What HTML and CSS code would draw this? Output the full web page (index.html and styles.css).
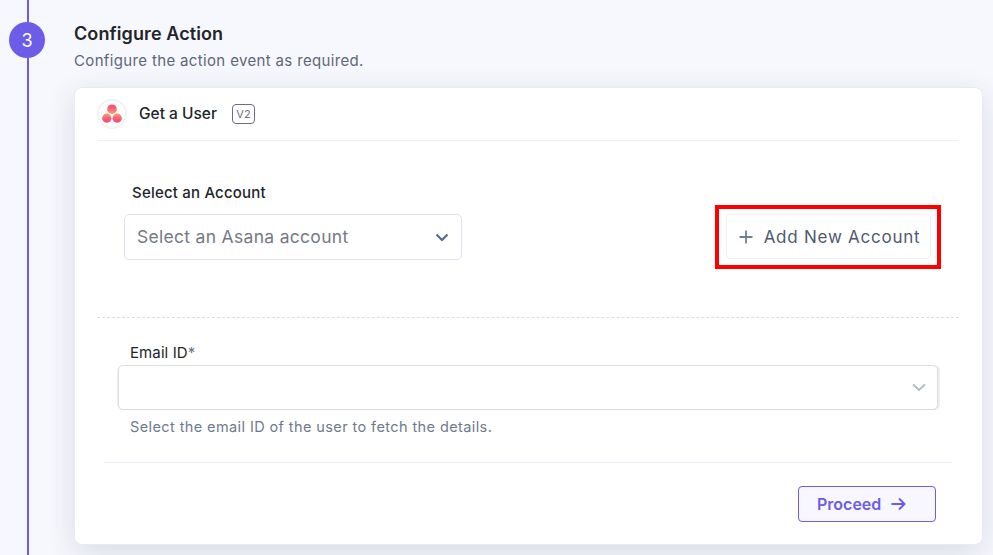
FILE: index.html
```html
<!DOCTYPE html>
<html lang="en">
<head>
    <meta charset="UTF-8">
    <meta name="viewport" content="width=device-width, initial-scale=1.0">
    <title>Configure Action</title>
    <link rel="stylesheet" href="styles.css">
</head>
<body>
    <div class="step">
        <div class="rail">
            <div class="rail-line rail-top"></div>
            <div class="step-number">3</div>
            <div class="rail-line rail-bottom"></div>
        </div>
        <div class="step-body">
            <h1>Configure Action</h1>
            <p class="step-desc">Configure the action event as required.</p>
            <div class="card">
                <div class="card-head">
                    <span class="app-logo">
                        <svg width="20" height="20" viewBox="0 0 20 20">
                            <defs>
                                <linearGradient id="asanaTop" x1="0" y1="0" x2="0" y2="1">
                                    <stop offset="0.25" stop-color="#f9507f"></stop>
                                    <stop offset="1" stop-color="#fda25f"></stop>
                                </linearGradient>
                                <linearGradient id="asanaLow" x1="0" y1="0" x2="0" y2="1">
                                    <stop offset="0" stop-color="#fd9a60"></stop>
                                    <stop offset="0.7" stop-color="#f9507f"></stop>
                                </linearGradient>
                            </defs>
                            <circle cx="10" cy="5.2" r="4.8" fill="url(#asanaTop)"></circle>
                            <circle cx="4.8" cy="14.2" r="4.6" fill="url(#asanaLow)"></circle>
                            <circle cx="15.2" cy="14.2" r="4.6" fill="url(#asanaLow)"></circle>
                        </svg>
                    </span>
                    <span class="action-name">Get a User</span>
                    <span class="version">V2</span>
                </div>
                <div class="account-row">
                    <div class="account-field">
                        <label class="account-label">Select an Account</label>
                        <div class="account-select">
                            <span class="placeholder">Select an Asana account</span>
                            <svg width="14" height="9" viewBox="0 0 14 9" fill="none" stroke="#54698d" stroke-width="2.2">
                                <path d="M1.5 1.5 7 7l5.5-5.5"></path>
                            </svg>
                        </div>
                    </div>
                    <div class="highlight">
                        <button class="add-account">
                            <svg width="14" height="14" viewBox="0 0 14 14" fill="none" stroke="#6b7f9e" stroke-width="1.8">
                                <path d="M7 .5v13M.5 7h13"></path>
                            </svg>
                            Add New Account
                        </button>
                    </div>
                </div>
                <div class="email-field">
                    <label class="email-label">Email ID<span class="star">*</span></label>
                    <div class="email-select">
                        <svg width="14" height="9" viewBox="0 0 14 9" fill="none" stroke="#b3bccb" stroke-width="2">
                            <path d="M1 1.5 7 7l6-5.5"></path>
                        </svg>
                    </div>
                    <p class="hint">Select the email ID of the user to fetch the details.</p>
                </div>
                <div class="card-foot">
                    <button class="proceed">
                        Proceed
                        <svg width="15" height="14" viewBox="0 0 15 14" fill="none" stroke="#6c5ce7" stroke-width="2">
                            <path d="M.5 7h13M8 1.5 13.5 7 8 12.5"></path>
                        </svg>
                    </button>
                </div>
            </div>
        </div>
    </div>
</body>
</html>
```

FILE: styles.css
```css
* {
    margin: 0;
    padding: 0;
    box-sizing: border-box;
}
html, body {
    height: 100%;
    overflow: hidden;
}
body {
    background: #f7f8fd;
    font-family: 'Inter', 'Liberation Sans', sans-serif;
    color: #212529;
}
.step {
    display: flex;
    height: 555px;
}
.rail {
    width: 74px;
    padding-left: 9px;
    display: flex;
    flex-direction: column;
    align-items: flex-start;
}
.rail-line {
    width: 2px;
    margin-left: 18px;
    background: #6c5ce7;
}
.rail-top {
    height: 22px;
}
.rail-bottom {
    flex: 1;
}
.step-number {
    width: 36px;
    height: 36px;
    border-radius: 50%;
    background: #6c5ce7;
    color: #fff;
    font-size: 18px;
    display: flex;
    align-items: center;
    justify-content: center;
}
.step-body {
    width: 909px;
    padding-top: 23px;
}
h1 {
    font-size: 18px;
    line-height: 22px;
    font-weight: 600;
    letter-spacing: 0.1px;
    color: #212529;
}
.step-desc {
    font-size: 15px;
    line-height: 20px;
    letter-spacing: 0.35px;
    color: #5c6779;
    margin-top: 6px;
}
.card {
    margin-top: 16px;
    height: 458px;
    background: #fff;
    border: 1px solid #e9ebf2;
    border-radius: 8px;
    box-shadow: 0 8px 30px rgba(40, 50, 90, 0.14);
    padding: 0 23px 0 22px;
}
.card-head {
    height: 53px;
    display: flex;
    align-items: center;
    border-bottom: 1px solid #eceef7;
}
.app-logo {
    width: 30px;
    height: 30px;
    border-radius: 50%;
    border: 2px solid #f2f2f4;
    display: flex;
    align-items: center;
    justify-content: center;
}
.action-name {
    font-size: 15.5px;
    font-weight: 500;
    margin-left: 12px;
    padding-bottom: 2px;
}
.version {
    margin-left: 15px;
    width: 23px;
    height: 20px;
    border: 1px solid #6f6a8a;
    border-radius: 4px;
    font-size: 11px;
    color: #6f7280;
    display: flex;
    align-items: center;
    justify-content: center;
}
.account-row {
    height: 177px;
    display: flex;
    justify-content: space-between;
    border-bottom: 1px dashed #dcdee3;
}
.account-field {
    padding: 43px 0 0 27px;
}
.account-label {
    display: block;
    padding-left: 8px;
    font-size: 15px;
    line-height: 17px;
    font-weight: 500;
    letter-spacing: 0.2px;
}
.account-select {
    width: 338px;
    height: 46px;
    margin-top: 13px;
    padding: 0 12px 0 12px;
    border: 1px solid #dfe3f0;
    border-radius: 5px;
    display: flex;
    align-items: center;
    justify-content: space-between;
    font-size: 17.5px;
    letter-spacing: 0.3px;
    color: #757a85;
}
.placeholder {
    padding-bottom: 2px;
}
.highlight {
    width: 226px;
    height: 64px;
    margin: 64px 18px 0 0;
    padding: 5px 6px 6px 7px;
    border: 4px solid #fe0000;
    display: flex;
}
.add-account {
    flex: 1;
    padding-left: 2px;
    display: flex;
    align-items: center;
    justify-content: center;
    gap: 11px;
    background: #fff;
    border: 1px solid #edf0f8;
    border-radius: 4px;
    font-family: inherit;
    font-size: 17px;
    letter-spacing: 0.75px;
    color: #4f5a6e;
}
.email-field {
    padding: 26px 21px 0 21px;
}
.email-label {
    display: block;
    padding-left: 12px;
    font-size: 15px;
    line-height: 17px;
    letter-spacing: 0.1px;
}
.star {
    color: #6b7280;
}
.email-select {
    height: 45px;
    margin-top: 4px;
    padding-right: 11px;
    border: 1px solid #dcdde1;
    border-radius: 5px;
    box-shadow: 2px 0 0 #eeeef1, -1px 0 0 #f1f1f4;
    display: flex;
    align-items: center;
    justify-content: flex-end;
}
.hint {
    padding-left: 12px;
    margin-top: 8px;
    font-size: 14.5px;
    line-height: 18px;
    letter-spacing: 0.4px;
    color: #6e7a8e;
}
.card-foot {
    margin: 26px 7px 0;
    border-top: 1px solid #eceef7;
    padding: 23px 16px 0 0;
    display: flex;
    justify-content: flex-end;
}
.proceed {
    width: 138px;
    height: 36px;
    padding: 0 0 1px 18px;
    display: flex;
    align-items: center;
    gap: 10px;
    background: #f8f7ff;
    border: 1px solid #6c5ce7;
    border-radius: 4px;
    font-family: inherit;
    font-size: 16px;
    font-weight: 600;
    color: #6c5ce7;
}
```
